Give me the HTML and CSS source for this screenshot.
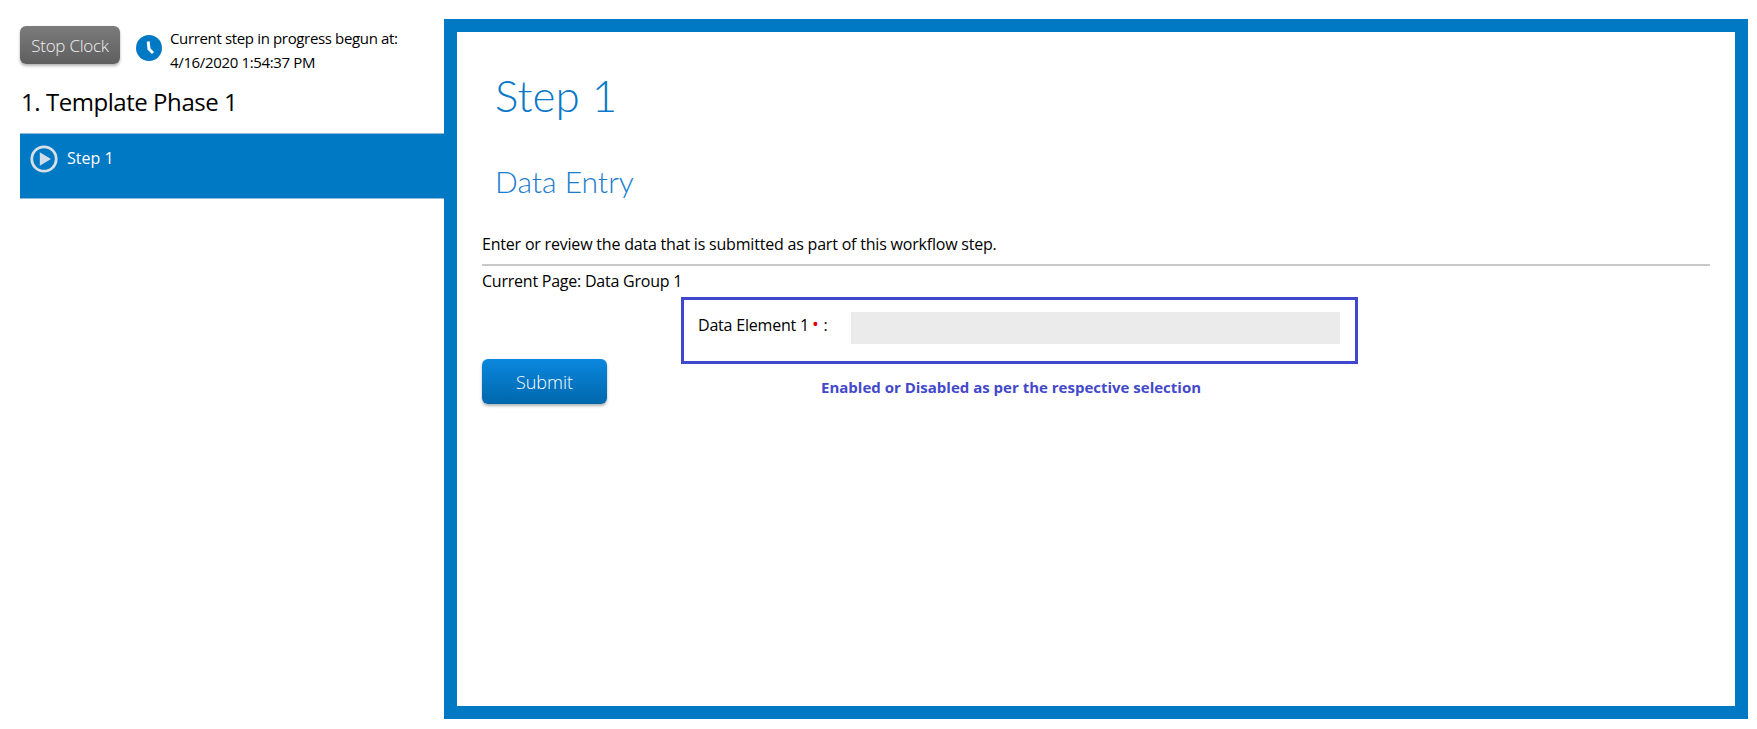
FILE: index.html
```html
<!DOCTYPE html>
<html lang="en">
<head>
<meta charset="utf-8">
<title>Step 1</title>
<link rel="stylesheet" href="styles.css">
</head>
<body>
<div class="page">
  <aside class="sidebar">
    <div class="clock-row">
      <button class="btn btn-stop" type="button">Stop Clock</button>
      <svg class="clock-icon" viewBox="0 0 26 26" width="26" height="26" aria-hidden="true">
        <circle cx="13" cy="13" r="13" fill="#0079c5"/>
        <path d="M12.2 6.5 L13 14 L17 18" fill="none" stroke="#fff" stroke-width="3" stroke-linejoin="round"/>
      </svg>
      <div class="clock-text">
        <div>Current step in progress begun at:</div>
        <div>4/16/2020 1:54:37 PM</div>
      </div>
    </div>
    <h2 class="phase">1. Template Phase 1</h2>
    <div class="step-item">
      <svg class="play-icon" viewBox="0 0 28 28" width="28" height="28" aria-hidden="true">
        <circle cx="14" cy="14" r="12.2" fill="none" stroke="#d8e0e6" stroke-width="2.8"/>
        <path d="M9.8 7.2 L21 14 L9.8 20.8 Z" fill="#cfdde8"/>
      </svg>
      <span>Step 1</span>
    </div>
  </aside>
  <main class="frame">
    <h1 class="title">Step 1</h1>
    <h2 class="subtitle">Data Entry</h2>
    <p class="desc">Enter or review the data that is submitted as part of this workflow step.</p>
    <hr class="rule">
    <p class="current">Current Page: Data Group 1</p>
    <div class="form-grid">
      <button class="btn btn-submit" type="button">Submit</button>
      <div class="form-right">
        <div class="highlight">
          <label class="field-label">Data Element 1<span class="req">•</span> :</label>
          <div class="field-input"></div>
        </div>
        <p class="note">Enabled or Disabled as per the respective selection</p>
      </div>
    </div>
  </main>
</div>
</body>
</html>
```
FILE: styles.css
```css
* { box-sizing: border-box; }
html, body { margin: 0; padding: 0; background: #fff; }
body { font-family: "Open Sans", "Noto Sans", sans-serif; color: #000; height: 729px; overflow: hidden; }
.page { display: flex; align-items: flex-start; padding: 19px 9px 0 20px; }
.sidebar { width: 424px; flex: none; }
.clock-row { display: flex; align-items: flex-start; padding-top: 7px; }
.btn { border: 0; color: #fff; font-family: "Open Sans", sans-serif; font-weight: 300; padding: 0; cursor: pointer; }
.btn-stop { width: 100px; height: 38px; border-radius: 6px; font-size: 17px; letter-spacing: -0.25px; color: #f0f0f0;
  background: linear-gradient(#7c7c7c, #5e5e5e); box-shadow: 0 2px 3px rgba(0,0,0,.3); }
.clock-icon { flex: none; margin: 9px 8px 0 16px; }
.clock-text { font-size: 15px; line-height: 24px; margin-top: 0; letter-spacing: -0.35px; }
.phase { font-size: 24px; font-weight: 400; line-height: 32px; margin: 12px 0 15px 1px; letter-spacing: -0.45px; }
.step-item { height: 66px; background: #0079c5; border-top: 1px solid #8fb9d6; border-bottom: 1px solid #8fb9d6;
  display: flex; align-items: flex-start; padding: 11px 0 0 10px; color: #fff; font-size: 16px; }
.step-item span { margin: 2px 0 0 9px; line-height: 22px; }
.frame { width: 1304px; height: 700px; border: 13px solid #0079c5; padding: 0 25px; flex: none; }
.title { font-family: Lato, sans-serif; font-weight: 300; font-size: 44px; line-height: 56px; color: #0a78c8; margin: 35px 0 0 13px; }
.subtitle { font-family: Lato, sans-serif; font-weight: 300; font-size: 30px; line-height: 36px; color: #1a7dcc; margin: 40px 0 0 13px; }
.desc { font-size: 16px; line-height: 22px; margin: 34px 0 0; letter-spacing: -0.2px; }
.rule { border: 0; border-top: 2px solid #c9c9c9; margin: 9px 0 0; }
.current { font-size: 16px; line-height: 22px; margin: 4px 0 0; letter-spacing: -0.23px; }
.form-grid { display: grid; grid-template-columns: 199px 677px; align-items: start; margin-top: 5px; }
.btn-submit { width: 125px; height: 45px; margin-top: 62px; border-radius: 6px; font-size: 18px;
  background: linear-gradient(#0a87de, #0067ac); box-shadow: 0 2px 3px rgba(0,0,0,.3); }
.highlight { height: 67px; border: 3px solid #3f48cc; display: flex; align-items: flex-start; padding: 12px 15px 0 14px; }
.field-label { width: 153px; flex: none; font-size: 16px; line-height: 22px; letter-spacing: -0.2px; margin-top: 2px; white-space: nowrap; }
.req { color: #e00000; margin-left: 3px; margin-right: 1px; font-size: 18px; line-height: 0; }
.field-input { flex: 1; height: 32px; background: #ebebeb; }
.note { font-size: 15px; font-weight: 700; line-height: 20px; color: #4349c9; margin: 13px 0 0 140px; }
```
